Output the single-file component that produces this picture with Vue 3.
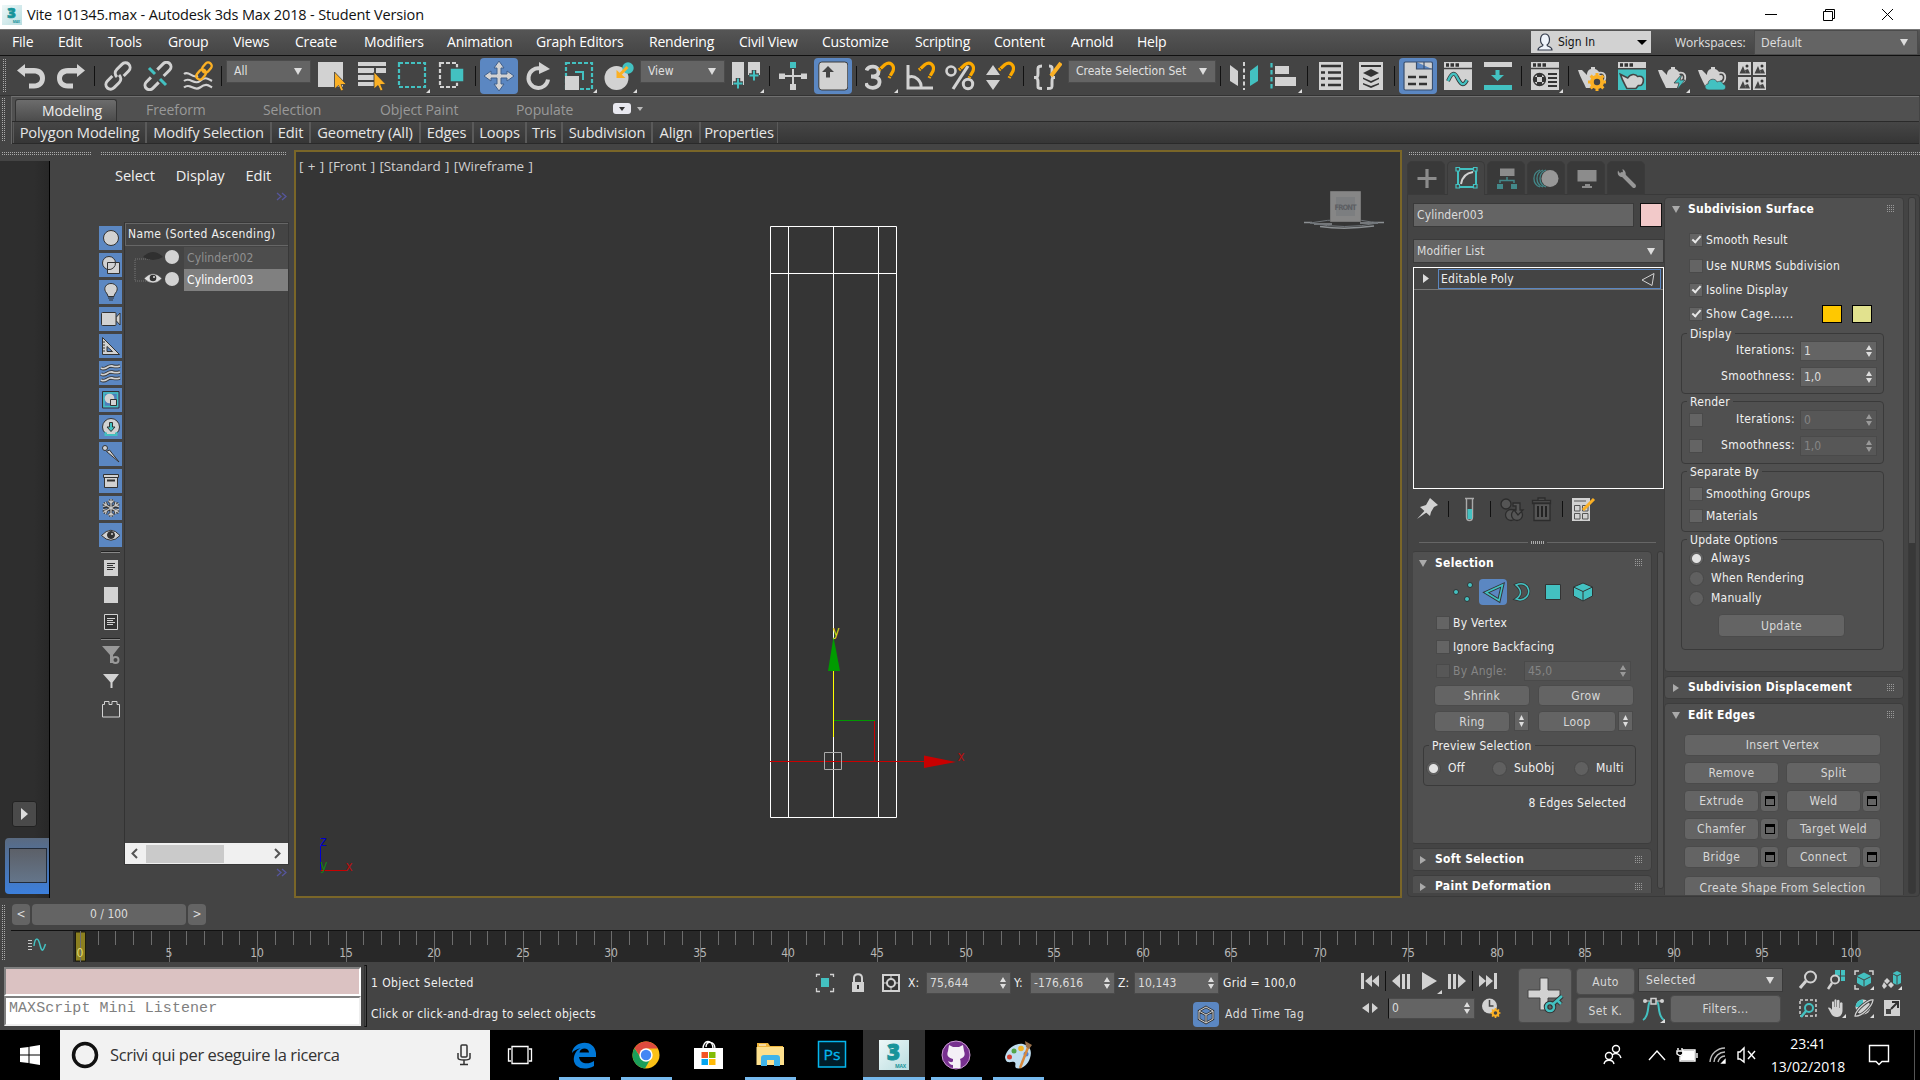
<script setup>
const menus = [
  ['File', 46], ['Edit', 50], ['Tools', 60], ['Group', 65], ['Views', 62], ['Create', 69], ['Modifiers', 83],
  ['Animation', 89], ['Graph Editors', 113], ['Rendering', 90], ['Civil View', 83], ['Customize', 93],
  ['Scripting', 79], ['Content', 77], ['Arnold', 66], ['Help', 50],
]
const tools = [
  'undo', 'redo', '|', 'link', 'unlink', 'bind', '|', { t: 'All', w: 87 }, 'select', 'selname', 'rect+', 'crossing', '|',
  'move*', 'rotate', 'scale+', 'place+', { t: 'View', w: 87 }, 'pivot+', '|', 'manip', 'keyb*', '|', 'snap3+', 'snapa', 'snapp', 'snaps', '|',
  'braces', { t: 'Create Selection Set', w: 150 }, '|', 'mirror', 'align+', '|', 'list', 'layers', '|', 'ribbon*', 'curve', 'schem', '|',
  'mat+', '|', 'tpgear', 'tpframe', 'tpbolt+', 'tpcloud', 'gallery',
].map((t) => {
  if (typeof t !== 'string') return { kind: 'combo', ...t }
  if (t === '|') return { kind: 'sep' }
  return { kind: 'icon', on: t.endsWith('*'), fly: t.endsWith('+'), id: '#' + t.replace(/[*+]/, '') }
})
const tabs = [['Modeling', 102, 26], ['Freeform', 116, 29], ['Selection', 118, 30], ['Object Paint', 136, 29], ['Populate', 98, 29]]
const groups = [
  ['Polygon Modeling', 133], ['Modify Selection', 125], ['Edit', 39], ['Geometry (All)', 110], ['Edges', 53],
  ['Loops', 53], ['Tris', 36], ['Subdivision', 90], ['Align', 48], ['Properties', 78],
]
const filters = ['sphere', 'shapes', 'bulb', 'camera', 'ruler', 'waves', 'groupi', 'xref', 'bone', 'box', 'snow', 'eye']
const cmdTabs = ['plus', 'modify', 'hier', 'motion', 'display', 'wrench']
const edgeRows = [
  [['Remove', 0], ['Split', 0]],
  [['Extrude', 1], ['Weld', 1]],
  [['Chamfer', 1], ['Target Weld', 0]],
  [['Bridge', 1], ['Connect', 1]],
]
const frames = Array.from({ length: 101 }, (_, i) => ({ i, x: Math.round(7 + i * 17.71) + 0.5 }))
const coords = [['X:', '75,644'], ['Y:', '-176,616'], ['Z:', '10,143']]
const apps = [
  ['edge', 1], ['chrome', 1], ['store', 0], ['folder', 1], ['ps', 0], ['max', 2], ['github', 1], ['paint', 1],
]
</script>

<template>
  <div class="app">
    <svg class="defs" width="0" height="0">
      <linearGradient id="gmax" x1="0" y1="0" x2="1" y2="1"><stop offset="0" stop-color="#eef8f8" /><stop offset="1" stop-color="#b9dde0" /></linearGradient>
      <g id="cursor"><path d="M0 0V17L4 13.5 6.5 19 9 18 6.700 12.500H12Z" fill="#fbb024" stroke="#3c3c3c" stroke-width=".8" /></g>
      <g id="magnet"><path d="M1 8 7 2.500C12-1 17 3 15 9L11 16" fill="none" stroke="#fba900" stroke-width="3.200" /><path d="M1.500 5.500 4 8.500M9.500 13 14 15" stroke="#444" stroke-width="1" /></g>
      <g id="teapot"><path d="M1 9H5L10 14C10 10 12 8.500 14 8V6H18V8C20 8.500 21 9.500 22 11 27 10 30 13 29 18 28 22 25 23 22 23L20 27H9C7 22 4 18 1 9Z" fill="#d2d2d2" /><path d="M22.500 13.500C26 12.500 27 15 26.500 17.500S24 20.500 23 20.500" fill="none" stroke="#444" stroke-width="1.500" /></g>
      <g id="gear"><circle r="5" fill="none" stroke="#fbb024" stroke-width="4" /><path d="M0-9V9M-9 0H9M-6.400-6.400 6.400 6.400M6.400-6.400-6.400 6.400" stroke="#fbb024" stroke-width="3" /><circle r="3.200" fill="#444" /></g>
      <symbol id="undo" viewBox="0 0 30 30"><path d="M1 9.500 9 3V7H18C25 7 29 11 29 17S25 27.500 18 27.500H13V22.500H18C22 22.500 24 20 24 17.500S22 12.500 18 12.500H9V16Z" fill="#d2d2d2" /></symbol>
      <symbol id="redo" viewBox="0 0 30 30"><path d="M29 9.500 21 3V7H12C5 7 1 11 1 17S5 27.500 12 27.500H17V22.500H12C8 22.500 6 20 6 17.500S8 12.500 12 12.500H21V16Z" fill="#d2d2d2" /></symbol>
      <symbol id="link" viewBox="0 0 30 30"><g transform="rotate(-45 15 15)" fill="none" stroke="#d2d2d2" stroke-width="3"><path d="M11 11H4A5 5 0 0 0 -1 16A5 5 0 0 0 4 20.500H11C14.500 20.500 16.500 18 16.500 15" /><path d="M19 19H26A5 5 0 0 0 31 14A5 5 0 0 0 26 9.500H19C15.500 9.500 13.500 12 13.500 15" /></g></symbol>
      <symbol id="unlink" viewBox="0 0 30 30"><g transform="rotate(-45 15 15)" fill="none" stroke="#d2d2d2" stroke-width="3"><path d="M11 20H2.500A4.500 4.500 0 0 1 2.500 11H9M19 19H27.500A4.500 4.500 0 0 0 27.500 10H19" /></g><path d="M6 7 12 13M17 18 23 24" stroke="#43c1c1" stroke-width="3" /></symbol>
      <symbol id="bind" viewBox="0 0 30 30"><path d="M1 13C6 9 9 18 15 15M1 20C7 15 11 25 17 20S25 18 29 20M1 26.500C7 21 11 31 17 26.500S25 24 29 26.500" fill="none" stroke="#d2d2d2" stroke-width="2.200" /><g transform="rotate(-50 21 10)" fill="none" stroke="#fbb024" stroke-width="2.400"><rect x="11" y="6.500" width="11" height="7" rx="3.500" /><rect x="20" y="6.500" width="11" height="7" rx="3.500" /></g></symbol>
      <symbol id="select" viewBox="0 0 30 30"><path d="M1 1H26V26H1Z" fill="#d2d2d2" /><use href="#cursor" x="17.500" y="11" /></symbol>
      <symbol id="selname" viewBox="0 0 30 30"><path d="M1 1H29V5H1ZM1 7H17V12H1ZM1 14H17V19H1ZM1 21H21V25H1ZM19 7H29V12H19Z" fill="#d2d2d2" /><use href="#cursor" x="17" y="11" /></symbol>
      <symbol id="rect" viewBox="0 0 30 30"><path d="M2 2H28V26H2Z" fill="none" stroke="#43c1c1" stroke-width="2.200" stroke-dasharray="4 2" /></symbol>
      <symbol id="crossing" viewBox="0 0 30 30"><path d="M3 2H20V26H3Z" fill="none" stroke="#d2d2d2" stroke-width="2.200" stroke-dasharray="4 2" /><path d="M13 7H27V21H13Z" fill="#43c1c1" stroke="#444" stroke-width="1.500" /></symbol>
      <symbol id="move" viewBox="0 0 30 30"><path d="M15 0 20 7H17V13H23V10L30 15 23 20V17H17V23H20L15 30 10 23H13V17H7V20L0 15 7 10V13H13V7H10Z" fill="#d2d2d2" stroke="#41608c" stroke-width="1" /></symbol>
      <symbol id="rotate" viewBox="0 0 30 30"><path d="M24 18.500A9.800 9.800 0 1 1 16 7.500" fill="none" stroke="#d2d2d2" stroke-width="4" /><path d="M15 1 26 8 15 13Z" fill="#d2d2d2" /></symbol>
      <symbol id="scale" viewBox="0 0 30 30"><path d="M2 2H28V28H2Z" fill="none" stroke="#43c1c1" stroke-width="2.200" stroke-dasharray="4 2" /><path d="M1 15H15V29H1Z" fill="#d2d2d2" /><path d="M11 11H19V19" fill="none" stroke="#43c1c1" stroke-width="2" /></symbol>
      <symbol id="place" viewBox="0 0 30 30"><circle cx="12.500" cy="17" r="12" fill="#d2d2d2" /><circle cx="24" cy="7" r="5.700" fill="#43c1c1" /><path d="M23.500 6 14.500 15" stroke="#fbb024" stroke-width="3" /><path d="M12.500 9V17H21.500Z" fill="#fbb024" /></symbol>
      <symbol id="pivot" viewBox="0 0 30 30"><path d="M1 1H13V24H1ZM17 1H29V14H17Z" fill="#d2d2d2" /><path d="M7 17V28M2 22.500H12M23 9V20M18 14.500H28" stroke="#444" stroke-width="4.500" /><path d="M7 17.500V27.500M2.500 22.500H11.500M23 9.500V19.500M18.500 14.500H27.500" stroke="#43c1c1" stroke-width="2" /></symbol>
      <symbol id="manip" viewBox="0 0 30 30"><path d="M4 15H26M15 8V26" stroke="#d2d2d2" stroke-width="2" /><path d="M1 12.500H7V18H1ZM23 12.500H29V18H23ZM12 23H18V29H12Z" fill="#d2d2d2" /><path d="M12 1H18V7H12Z" fill="#43c1c1" /></symbol>
      <symbol id="keyb" viewBox="0 0 30 30"><rect x="0.800" y="1" width="29" height="28" rx="3" fill="#d2d2d2" stroke="#3c3c3c" /><path d="M10 5 16 11H12V16.500H8V11H4Z" fill="#444" /></symbol>
      <symbol id="snap3" viewBox="0 0 30 30"><path d="M1.500 9.500C3 4 14 4 13.500 11 13.500 15 10 15.500 6 15.500 11 15.500 15 17 14.500 21.500 14 28.500 2 28.500 1 22" fill="none" stroke="#d2d2d2" stroke-width="3.800" /><use href="#magnet" x="13" y="1" /></symbol>
      <symbol id="snapa" viewBox="0 0 30 30"><path d="M3 4V27H28M4 16C10 14 17 20 16 27" fill="none" stroke="#d2d2d2" stroke-width="3" /><use href="#magnet" x="13" y="1" /></symbol>
      <symbol id="snapp" viewBox="0 0 30 30"><path d="M23 5 8 28" stroke="#d2d2d2" stroke-width="3.200" /><circle cx="6" cy="10" r="4.500" fill="none" stroke="#d2d2d2" stroke-width="2.600" /><circle cx="23" cy="23" r="4.700" fill="none" stroke="#d2d2d2" stroke-width="3" /><use href="#magnet" x="13" y="1" /></symbol>
      <symbol id="snaps" viewBox="0 0 30 30"><path d="M8 4 15 14H1ZM8 29 15 19H1Z" fill="#d2d2d2" /><use href="#magnet" x="13" y="1" /></symbol>
      <symbol id="braces" viewBox="0 0 30 30"><path d="M10 5C5 5 6 7 6 12S5 16.500 2 16.500C5 16.500 6 17 6 22S5 27.500 10 27.500M17 5C21 5 20 7 20 12S21 16.500 23 16.500C20 16.500 20 17 20 22S21 27.500 15 27.500" fill="none" stroke="#d2d2d2" stroke-width="3" /><path d="M19 15 29 2" stroke="#fbb024" stroke-width="4" /></symbol>
      <symbol id="mirror" viewBox="0 0 30 30"><path d="M1 4 9 10V25L1 20Z" fill="#d2d2d2" /><path d="M29 4 21 10V25L29 20Z" fill="#43c1c1" /><path d="M15 1V29" stroke="#d2d2d2" stroke-width="2" stroke-dasharray="4 2.500" /></symbol>
      <symbol id="align" viewBox="0 0 30 30"><path d="M2.500 2V28" stroke="#43c1c1" stroke-width="2.200" stroke-dasharray="4.500 2.500" /><path d="M6 5H20V13H6ZM6 16H27V25H6Z" fill="#d2d2d2" /></symbol>
      <symbol id="list" viewBox="0 0 30 30"><path d="M3 1H27V29H3Z" fill="#d2d2d2" /><path d="M5 5H25M5 11.500H9M12 11.500H25M5 17.500H9M12 17.500H25M5 24H9M12 24H25" stroke="#333" stroke-width="2.500" /></symbol>
      <symbol id="layers" viewBox="0 0 30 30"><path d="M3 1H27V29H3Z" fill="#d2d2d2" /><path d="M5 5H25" stroke="#333" stroke-width="2" /><path d="M15 8 23 12 15 16 7 12ZM7 16.500 15 20 23 16.500V18L15 22 7 18ZM7 22 15 25 23 22V23.500L15 27 7 23.500Z" fill="#333" /></symbol>
      <symbol id="ribbon" viewBox="0 0 30 30"><path d="M2 1H28Q29.500 1 29.500 2.500V27.500Q29.500 29 28 29H2.500Q1 29 1 27.500V2.500Q1 1 2.500 1ZM13.500 1V8H29M21 1V8" fill="#d2d2d2" stroke="#3a4f6d" stroke-width="1.200" /><path d="M5 16H13M16 16H24M5 23H13M16 23H24" stroke="#333" stroke-width="2.500" /></symbol>
      <symbol id="curve" viewBox="0 0 30 30"><path d="M1 1H29V29H1Z" fill="#d2d2d2" /><path d="M1 7.500H29" stroke="#444" stroke-width="1.500" /><path d="M3 4H6M7.500 4H11M12.500 4H16" stroke="#333" stroke-width="3.500" /><path d="M5 20C8 13 11 10 14 16S20 27 24 19" fill="none" stroke="#333" stroke-width="4" /><path d="M5 20C8 13 11 10 14 16S20 27 24 19" fill="none" stroke="#43c1c1" stroke-width="2.400" /></symbol>
      <symbol id="schem" viewBox="0 0 30 30"><path d="M1 1H29V6H1Z" fill="#d2d2d2" /><path d="M1 24H29V29H1ZM12.500 9H16.500V14H21L14.500 20 8 14H12.500Z" fill="#43c1c1" /></symbol>
      <symbol id="mat" viewBox="0 0 30 30"><path d="M1 1H29V29H1Z" fill="#d2d2d2" /><path d="M1 7.500H29" stroke="#444" stroke-width="1.500" /><path d="M3 4H6M7.500 4H11M12.500 4H16" stroke="#333" stroke-width="3.500" /><path d="M18 13H27M18 17H27M18 21H27M18 25H27" stroke="#333" stroke-width="2" /><circle cx="9.500" cy="18.500" r="6" fill="none" stroke="#333" stroke-width="1.300" /><path d="M7 13H12V16H7ZM4 16H7V21H4ZM12 16H15V21H12ZM7 21H12V24H7Z" fill="#333" /></symbol>
      <symbol id="tpgear" viewBox="0 0 30 30"><use href="#teapot" /><use href="#gear" x="20" y="21" /></symbol>
      <symbol id="tpframe" viewBox="0 0 30 30"><path d="M1 1H29V7H1Z" fill="#d2d2d2" /><path d="M3 4H6M7.500 4H11M12.500 4H16" stroke="#333" stroke-width="3.500" /><path d="M1 8.500H29V29H1Z" fill="#43c1c1" /><g transform="translate(2.500 8) scale(.82 .75)"><path d="M1 7 10 12C13 6 20 6 22 10 28 9 30 12 29 17S26 22 23 22L20 26H9C7 21 4 17 1 7Z" fill="#d2d2d2" stroke="#444" stroke-width="2" /></g></symbol>
      <symbol id="tpbolt" viewBox="0 0 30 30"><use href="#teapot" /><path d="M25 13 17 22H22L20 29 28 19H23Z" fill="#43c1c1" stroke="#444" stroke-width=".8" /></symbol>
      <symbol id="tpcloud" viewBox="0 0 30 30"><use href="#teapot" /><path d="M12 29C7 29 7 23 11 23 11 17 19 17 20 21 24 19 26 22 26 23 30 24 29 29 26 29Z" fill="#43c1c1" stroke="#444" stroke-width=".7" /></symbol>
      <symbol id="gallery" viewBox="0 0 30 30"><g id="gpic"><path d="M1 1H14V14H1Z" fill="#d2d2d2" /><path d="M2.500 12.500 6 5 9 12.500ZM8 9 11 8 13 12.500H9Z" fill="#444" /><circle cx="10" cy="5" r="1.500" fill="#333" /></g><use href="#gpic" x="15" /><use href="#gpic" y="15" /><use href="#gpic" x="15" y="15" /></symbol>

      <symbol id="sphere" viewBox="0 0 23 24"><circle cx="12" cy="12" r="7.500" /></symbol>
      <symbol id="shapes" viewBox="0 0 23 24"><circle cx="10" cy="10" r="6.500" /><path d="M8.500 9.500H20.500V20.500H8.500Z" /><path d="M16.500 9.500A6.500 6.500 0 0 1 9 16.500" fill="none" /></symbol>
      <symbol id="bulb" viewBox="0 0 23 24"><path d="M12 3.500C17 3.500 19.500 8 17.500 11.500 16 14 15.500 14 15 16.500H9C8.500 14 8 14 6.500 11.500 4.500 8 7 3.500 12 3.500Z" /><path d="M9 18H15M10 20H14" /></symbol>
      <symbol id="camera" viewBox="0 0 23 24"><path d="M17 10.500 21 6V18L17 13.500Z" /><rect x="2.500" y="5.500" width="14.500" height="13" rx="1" /></symbol>
      <symbol id="ruler" viewBox="0 0 23 24"><path d="M3.500 3.500V20.500H20.500ZM8 12.500 13.500 17.500H8Z" fill-rule="evenodd" /><path d="M4 8H6M4 11H6M4 14H6M4 17H6" /></symbol>
      <symbol id="waves" viewBox="0 0 23 24"><path d="M2 7C7 10 8 4 13 5S17 6 21 5M2 13C7 16 8 10 13 11S17 12 21 11M2 19C7 22 8 16 13 17S17 18 21 17" fill="none" stroke-width="3.500" /><path d="M2 7C7 10 8 4 13 5S17 6 21 5M2 13C7 16 8 10 13 11S17 12 21 11M2 19C7 22 8 16 13 17S17 18 21 17" fill="none" stroke="#d2d2d2" stroke-width="1.800" /></symbol>
      <symbol id="groupi" viewBox="0 0 23 24"><path d="M3.500 3.500H20V20H3.500Z" fill="#4d7dbb" /><path d="M5 5H18.500V18.500H5Z" fill="none" stroke="#43c1c1" stroke-width="1.500" /><circle cx="10.500" cy="10.500" r="4.800" stroke="none" /><path d="M11.500 11.500H17.500V17.500H11.500Z" /></symbol>
      <symbol id="xref" viewBox="0 0 23 24"><circle cx="12" cy="12" r="8.500" /><path d="M10.500 7.500H13.500V12H16L12 16.500 8 12H10.500Z" fill="#43c1c1" /><path d="M6.500 17V20H17.500V17" fill="none" stroke="#43c1c1" stroke-width="2" /></symbol>
      <symbol id="bone" viewBox="0 0 23 24"><circle cx="6" cy="6" r="2.500" /><path d="M7.500 9.500 10.500 8 20 20Z" /></symbol>
      <symbol id="box" viewBox="0 0 23 24"><path d="M5.500 8.500H18.500V18.500H5.500ZM4.500 5.500H19.500V8.500H4.500Z" /><path d="M8 11.500H16" stroke-width="2" /></symbol>
      <symbol id="snow" viewBox="0 0 23 24"><g fill="none" stroke-width="3"><path id="sn" d="M12 3V21M4.200 7.500 19.800 16.500M4.200 16.500 19.800 7.500M9.500 4.500 12 7 14.500 4.500M9.500 19.500 12 17 14.500 19.500M4 10.500 7.500 9.500 6.500 6M17 18 16 14.500 20 13.500M4 13.500 7.500 14.500 6.500 18M17 6 16 9.500 20 10.500" /></g><use href="#sn" fill="none" stroke="#c8c8c8" stroke-width="1.300" /></symbol>
      <symbol id="eye" viewBox="0 0 23 24"><path d="M2.500 12.500Q12 2 21 12.500 12 22 2.500 12.500Z" /><circle cx="12" cy="12" r="3.500" fill="#333" /><circle cx="13" cy="11" r="1" stroke="none" /></symbol>

      <symbol id="plus" viewBox="0 0 38 33"><path d="M19 8V27M9.500 17.500H28.500" stroke="#8c8c8c" stroke-width="3.200" /></symbol>
      <symbol id="modify" viewBox="0 0 38 33"><path d="M10 8H28V26H10Z" fill="none" stroke="#43c1c1" stroke-width="2" /><path d="M8 6.500H11.500V10H8ZM25.500 6.500H29V10H25.500ZM8 23.500H11.500V27H8ZM25.500 23.500H29V27H25.500Z" fill="#444" stroke="#43c1c1" stroke-width="1.200" /><path d="M13 23C14 17 18 12 25 11" fill="none" stroke="#d2d2d2" stroke-width="2" /></symbol>
      <symbol id="hier" viewBox="0 0 38 33"><path d="M12 7.500H26.500V15H12Z" fill="#8c8c8c" /><path d="M19 16V19M12 22V19.500H26V22" fill="none" stroke="#43898a" stroke-width="1.500" /><path d="M9 23H15V28H9ZM23 23H29V28H23Z" fill="#43898a" /></symbol>
      <symbol id="motion" viewBox="0 0 38 33"><path d="M15 9A9 9 0 0 0 15 26M12 9A9 9 0 0 0 12 26M18 9A9 9 0 0 0 18 26" fill="none" stroke="#43898a" stroke-width="1.300" /><circle cx="22" cy="17.500" r="8.500" fill="#979797" /></symbol>
      <symbol id="display" viewBox="0 0 38 33"><path d="M9.500 9H28.500V20.500H9.500ZM17 23H22V25H24V27H14V25H17Z" fill="#8c8c8c" /></symbol>
      <symbol id="wrench" viewBox="0 0 38 33"><path d="M14 13 26 25" stroke="#979797" stroke-width="4" stroke-linecap="round" /><path d="M10 9.500C8.500 15 13 17 16 15.500S18 10 14.500 8L15 11.500 12.500 13Z" fill="#979797" /></symbol>

      <symbol id="mag" viewBox="0 0 20 20"><circle cx="12.500" cy="7" r="5.500" fill="none" stroke="#d2d2d2" stroke-width="2" /><path d="M8 11 2 18" stroke="#d2d2d2" stroke-width="3" /></symbol>
      <symbol id="magall" viewBox="0 0 20 20"><path d="M9 0H19V11H9Z" fill="#43c1c1" /><path d="M14.500 0V11M9 6H19" stroke="#444" /><circle cx="9" cy="9.500" r="4" fill="#444" stroke="#d2d2d2" stroke-width="1.800" /><path d="M6 13 2 19" stroke="#d2d2d2" stroke-width="2.500" /></symbol>
      <symbol id="extents" viewBox="0 0 20 20"><path d="M1 5V1H5M15 1H19V5M1 15V19H5" fill="none" stroke="#d2d2d2" stroke-width="1.500" /><path d="M10 2.500 17 6V13L10 17 3 13V6Z" fill="#43c1c1" /><path d="M3 6.500 10 10 17 6.500M10 10V17" fill="none" stroke="#444" /><path d="M20 16V20H16Z" fill="#ddd" /></symbol>
      <symbol id="extall" viewBox="0 0 20 20"><path d="M5 8 8 11 5 14 2 11ZM9 12 12 15 9 18 6 15ZM2 12 5 16 2 19 0 16Z" fill="#d2d2d2" /><path d="M11 3 15 1 19 3V13L15 15 11 13Z" fill="#43c1c1" /><path d="M11 4 15 6 19 4M15 6V15" fill="none" stroke="#444" /><path d="M20 16V20H16Z" fill="#ddd" /></symbol>
      <symbol id="magreg" viewBox="0 0 20 20"><path d="M2 2H18V18H2Z" fill="none" stroke="#d2d2d2" stroke-width="1.500" stroke-dasharray="3 2" /><circle cx="11" cy="10" r="4" fill="#444" stroke="#43c1c1" stroke-width="2" /><path d="M8 13 3 19" stroke="#43c1c1" stroke-width="2.500" /></symbol>
      <symbol id="hand" viewBox="0 0 20 20"><path d="M2 10C3 9 5 10 6 12V4Q7 2.500 8 4V9H8.500V2Q9.500 .5 10.500 2V9H11V2.500Q12 1 13.500 2.500V10H14V5Q15 3.500 16.500 5V13C16 18 13 19 10.500 19 6 19 5 15 2 10Z" fill="#d2d2d2" /><path d="M20 16V20H16Z" fill="#ddd" /></symbol>
      <symbol id="orbit" viewBox="0 0 20 20"><circle cx="9" cy="9" r="7.500" fill="#d2d2d2" /><path d="M9 9V1.500A7.500 7.500 0 0 0 1.500 9Z" fill="#43c1c1" /><path d="M1 18C7 19 18 9 19 2 15 1 2 11 1 18Z" fill="none" stroke="#444" stroke-width="3" /><path d="M1 18C7 19 18 9 19 2 15 1 2 11 1 18Z" fill="none" stroke="#d2d2d2" stroke-width="1.300" /><path d="M20 16V20H16Z" fill="#ddd" /></symbol>
      <symbol id="maxi" viewBox="0 0 20 20"><path d="M2 2H18V18H2Z" fill="#d2d2d2" /><path d="M10 4H16V10M15.500 4.500 9 11" stroke="#333" stroke-width="2" fill="none" /><path d="M4 11H9V16H4Z" fill="#444" /></symbol>

      <symbol id="edge" viewBox="0 0 30 30"><path d="M3 13C4 1 25-2 27 13V17H10C11 24 19 25 25 21V26C14 32 3 27 5 17 6 12 9 9 12 8 9 9 5 10 3 13ZM10.500 12.500H20C20 7 11 7 10.500 12.500Z" fill="#0078d7" fill-rule="evenodd" /></symbol>
      <symbol id="chrome" viewBox="0 0 30 30"><circle cx="15" cy="15" r="13.500" fill="#fbc116" /><path d="M3.500 8A13.500 13.500 0 0 0 14 28.500L20 18 10 18Z" fill="#1b9e5a" /><path d="M3.500 8A13.500 13.500 0 0 1 26.800 8.500H15L9.500 13V17Z" fill="#dd4b3e" /><circle cx="15" cy="15" r="6.700" fill="#fff" /><circle cx="15" cy="15" r="5.200" fill="#4487f4" /></symbol>
      <symbol id="store" viewBox="0 0 30 30"><path d="M10 9C10-1 20-1 20 9M13 7C13 0 22 1 22 9" fill="none" stroke="#fff" stroke-width="1.400" /><path d="M1 8H30V29H1Z" fill="#fff" /><path d="M8.500 12H15V18H8.500Z" fill="#f35325" /><path d="M16 12H22.500V18H16Z" fill="#81bc06" /><path d="M8.500 19H15V25H8.500Z" fill="#05a6f0" /><path d="M16 19H22.500V25H16Z" fill="#ffba08" /></symbol>
      <symbol id="folder" viewBox="0 0 30 30"><path d="M2 3H13L15 6H28V14H2Z" fill="#f0b63c" /><path d="M1.500 7H29V25H1.500Z" fill="#fde08d" /><path d="M4 5H11" stroke="#fff" /><path d="M6 26V18Q6 15 9 15H22Q25 15 25 18V26H19V20H12V26Z" fill="#3fb4ea" /></symbol>
      <symbol id="ps" viewBox="0 0 30 30"><path d="M1.500 1.500H28.500V27H1.500Z" fill="#001d29" stroke="#05b6ee" stroke-width="1.500" /><text x="6.500" y="20" font-size="15" fill="#05b6ee" stroke="#05b6ee" stroke-width=".3" textLength="17" lengthAdjust="spacingAndGlyphs">Ps</text></symbol>
      <symbol id="max" viewBox="0 0 30 30"><path d="M0 0H30V30H0Z" fill="url(#gmax)" /><text x="8" y="19.500" font-size="22" font-weight="900" fill="#18949a" stroke="#18949a">3</text><text x="16" y="27.500" font-size="5" font-weight="bold" fill="#18949a" letter-spacing="-.2">MAX</text></symbol>
      <symbol id="github" viewBox="0 0 30 30"><circle cx="15" cy="15" r="14" fill="#77308f" stroke="#c99bd2" /><path d="M8 5 12 7H18L22 5 23 11C25 16 22 18 19 19 20 21 19.500 25 19.500 28H12V25C9 25 8 23 7 21 9 22 11 23 12 21V19C8 18 5 16 7 11Z" fill="#f4f0f6" /></symbol>
      <symbol id="paint" viewBox="0 0 30 30"><path d="M2 17C4 8 12 3 20 4 28 6 29 12 27 18 25 25 18 30 13 28 11 26 14 23 11 22 8 21 3 25 2 17Z" fill="#c0def0" /><circle cx="6.500" cy="17" r="2.500" fill="#d54335" /><circle cx="11" cy="11" r="2.500" fill="#53a548" /><circle cx="18" cy="8.500" r="2.800" fill="#f0b429" /><circle cx="23" cy="14" r="2.500" fill="#4f81d3" /><path d="M26 5 17 28" stroke="#d88a3d" stroke-width="2.500" /><path d="M22 1 29 5 26 9 23 7Z" fill="#9a714c" /></symbol>
    </svg>

    <header class="title">
      <svg width="20" height="20" viewBox="0 0 30 30"><use href="#max" width="30" height="30" /></svg>
      <span class="title-text">Vite 101345.max - Autodesk 3ds Max 2018 - Student Version</span>
      <svg class="win" width="150" height="29" fill="none" stroke="#000"><path d="M20 14.500H32M78.500 11.500H87.500V20.500H78.500ZM80.500 11V9.500H89.500V18.500H88M137 9 148 20M148 9 137 20" /></svg>
    </header>

    <nav class="menu">
      <span v-for="m in menus" :key="m[0]" :style="{ width: m[1] + 'px' }">{{ m[0] }}</span>
      <div class="signin">
        <svg width="18" height="20" viewBox="0 0 18 20"><path d="M2 18C2 14 7 15 7 13 3 10 4 2 9 2S15 10 11 13C11 15 16 14 16 18Z" fill="#eef3fb" stroke="#333b4c" stroke-width="1.200" /></svg>
        <b>Sign In</b><i class="tri black"></i>
      </div>
      <span class="ws">Workspaces:</span>
      <div class="wscombo">Default<i class="tri"></i></div>
    </nav>

    <div class="toolbar">
      <i class="grip v"></i>
      <template v-for="(t, n) in tools" :key="n">
        <i v-if="t.kind === 'sep'" class="tsep"></i>
        <div v-else-if="t.kind === 'combo'" class="tcombo" :style="{ width: t.w + 'px' }"><span>{{ t.t }}<i class="tri"></i></span></div>
        <div v-else class="tool" :class="{ on: t.on, fly: t.fly }"><svg width="30" height="30"><use :href="t.id" width="30" height="30" /></svg></div>
      </template>
    </div>

    <div class="ribbon">
      <i class="grip v"></i>
      <div class="ribbon-main">
        <div class="tabs">
          <span v-for="(t, n) in tabs" :key="t[0]" :class="{ cur: !n }" :style="{ width: t[1] + 'px', paddingLeft: t[2] + 'px' }">{{ t[0] }}</span>
          <i class="pill"><i class="tri small"></i></i><i class="tri small pale"></i>
        </div>
        <div class="groups"><span v-for="g in groups" :key="g[0]" :style="{ width: g[1] + 'px' }">{{ g[0] }}</span></div>
      </div>
    </div>

    <main class="work">
      <aside class="strip">
        <i class="grip h"></i>
        <div class="strip-body">
          <div class="play"><svg width="8" height="12"><path d="M0 0 7 6 0 12Z" fill="#ddd" /></svg></div>
          <div class="thumb"><i></i></div>
        </div>
      </aside>

      <aside class="explorer">
        <i class="grip h"></i>
        <div class="ex-menu"><span>Select</span><span>Display</span><span>Edit</span></div>
        <svg class="more" width="12" height="9"><path d="M1 1 5 4.500 1 8M6 1 10 4.500 6 8" fill="none" stroke="#55559c" stroke-width="1.300" /></svg>
        <div class="ex-body">
          <div class="ex-icons">
            <svg v-for="f in filters" :key="f" class="fbtn" width="23" height="24" fill="#d2d2d2" stroke="#333"><use :href="'#' + f" /></svg>
            <svg width="23" height="180" viewBox="0 550 23 180" fill="#d2d2d2">
              <path d="M2 551.500H21M2 638.500H21" stroke="#222" /><path d="M2 552.500H21M2 639.500H21" stroke="#888" />
              <path d="M5 560H19V576H5ZM5 587H19V603H5Z" /><path d="M5.500 614.500H18.500V629.500H5.500Z" fill="#333" stroke="#d2d2d2" />
              <path d="M8 563.500H16M8 565.500H14M8 567.500H16M8 569.500H14" stroke="#333" /><path d="M8 618.500H16M8 620.500H14M8 622.500H16M8 624.500H14" stroke="#d2d2d2" />
              <path d="M3 646H21L14 655V663H11V655Z" fill="#999" /><circle cx="16.500" cy="660" r="3" fill="#444" stroke="#999" stroke-width="2" />
              <path d="M4 674H20L13.500 682.500V688H11.500V682.500Z" /><path d="M3.500 704.500H5.500V701.500H10V704.500H13V701.500H18V704.500H20.500V717H3.500Z" fill="none" stroke="#d2d2d2" />
            </svg>
          </div>
          <div class="ex-list">
            <div class="ex-head">Name (Sorted Ascending)</div>
            <div class="ex-row dim">
              <svg width="59" height="22"><path d="M25 12H10V22" fill="none" stroke="#777" stroke-dasharray="1 1" /><path d="M18 10Q28 0 38 10 28 16 18 10Z" fill="#303030" /><circle cx="47" cy="10" r="7" fill="#d2d2d2" /></svg><span>Cylinder002</span>
            </div>
            <div class="ex-row sel">
              <svg width="59" height="22"><path d="M25 12H10V0" fill="none" stroke="#777" stroke-dasharray="1 1" /><path d="M19 9.500Q28 0 37 9.500 28 18.500 19 9.500Z" fill="#ddd" stroke="#333" stroke-width=".5" /><circle cx="28" cy="9" r="3.300" fill="#333" /><circle cx="29" cy="8" r="1" fill="#ddd" /><circle cx="47" cy="10" r="7" fill="#d2d2d2" /></svg><span>Cylinder003</span>
            </div>
            <div class="hscroll"><svg width="163" height="21" fill="none" stroke="#555" stroke-width="2"><path d="M21 2H99V20H21Z" fill="#cacaca" stroke="none" /><path d="M12 6 7.500 10.500 12 15M150 6 154.500 10.500 150 15" /></svg></div>
          </div>
        </div>
        <svg class="more" width="12" height="9"><path d="M1 1 5 4.500 1 8M6 1 10 4.500 6 8" fill="none" stroke="#55559c" stroke-width="1.300" /></svg>
      </aside>

      <section class="viewport">
        <div class="vlabel">[ + ] [Front ] [Standard ] [Wireframe ]</div>
        <svg class="scene" width="1104" height="744" viewBox="296 152 1104 744" fill="none">
          <path d="M770.500 226.500H896.500V817.500H770.500ZM770.500 273.500H896.500M788.500 226V817M833.500 226V817M878.500 226V817" stroke="#fff" />
          <path d="M833.500 671V737" stroke="#ff0" /><path d="M834 720.500H875" stroke="#090" /><path d="M874.500 721V761M770 761.500H924" stroke="#c80000" />
          <path d="M833.500 637 840 671H828Z" fill="#009b00" /><path d="M924 755.500V768L956 762Z" fill="#c80000" /><path d="M824.500 752.500H841.500V769.500H824.500Z" stroke="#aaa" />
          <path d="M320.500 846V870" stroke="#0000d0" /><path d="M321 870.500H347" stroke="#c80000" />
          <text x="320" y="846" fill="#0000c8" font-size="14">z</text><text x="345.500" y="871" fill="#b41010" font-size="13.500">x</text><text x="320" y="870" fill="#148214" font-size="14">y</text>
          <text x="832.500" y="636" fill="#dcdc10" font-size="13.500">y</text><text x="957.500" y="761" fill="#b41010" font-size="13.500">x</text>
          <path d="M1304 222.500H1312M1314 224H1332M1360 223H1378M1372 222.500H1384M1320 226.500Q1345 230 1374 226" stroke="#8b8f92" stroke-width="1.500" /><path d="M1310 223Q1345 216 1378 223 1345 230 1310 223Z" stroke="#70757a" />
          <path d="M1330.500 191.500H1360.500V221.500H1330.500Z" fill="#868686" stroke="#777" /><path d="M1336 197H1355V216H1336Z" fill="#7c7e80" />
          <text x="1334.500" y="210" font-size="7.500" font-weight="bold" fill="#5c5f63" textLength="22">FRONT</text>
        </svg>
      </section>

      <aside class="panel">
        <i class="grip h"></i>
        <div class="ctabs"><span v-for="(c, n) in cmdTabs" :key="c" :class="{ cur: n === 1 }"><svg width="38" height="33"><use :href="'#' + c" /></svg></span></div>
        <div class="pbody">
          <div class="pleft">
            <div class="namerow"><div class="field">Cylinder003</div><i class="pink"></i></div>
            <div class="field modlist">Modifier List<i class="tri"></i></div>
            <div class="stack"><div class="srow"><svg width="24" height="19"><path d="M9 5 15 9.500 9 14Z" fill="#ddd" /></svg><div class="sname">Editable Poly<svg width="15" height="15"><path d="M1 8 13 1.500 11 13.500Z" fill="none" stroke="#d2d2d2" /></svg></div></div></div>
            <svg class="sicons" width="240" height="34" viewBox="1413 493 240 34">
              <path d="M1428 508 1417 520 1430 511Z" fill="#d2d2d2" /><path d="M1430 499 1438 506 1434 508 1431 513 1430 517 1420 508 1426 506Z" fill="#d2d2d2" />
              <path d="M1448.500 502V518M1490.500 502V518M1562.500 502V518" stroke="#111" />
              <path d="M1465 499.500H1474M1466.500 500V518Q1466.500 521.500 1469.500 521.500T1472.500 518V500" stroke="#aaa" fill="none" stroke-width="1.400" /><path d="M1467.500 510H1472V520H1467.500Z" fill="#43c1c1" />
              <g fill="#555" stroke="#2c2c2c" stroke-width="1.300"><circle cx="1506" cy="505" r="5" /><circle cx="1511" cy="516" r="5.500" /><circle cx="1517" cy="516" r="5.500" /><path d="M1513 504H1520V511H1523L1518 516 1514 511H1516V507H1513Z" /><path d="M1533 504H1550V521.500H1534V504ZM1532.500 501.500H1550.500V504.500H1532.500ZM1538 501.500V499H1545V501.500" /></g>
              <path d="M1538 507V518M1542 507V518M1546 507V518" stroke="#222" stroke-width="2" />
              <path d="M1572 499H1590V522H1572Z" fill="#d2d2d2" /><path d="M1574 502H1586M1574.500 506.500H1580V512H1574.500ZM1582.500 506.500H1588V512H1582.500ZM1574.500 514.500H1580V520H1574.500ZM1582.500 514.500H1588V520H1582.500Z" fill="none" stroke="#555" /><path d="M1583 511 1594 500" stroke="#fbb024" stroke-width="3" />
            </svg>
            <div class="split"><i></i><b></b><i></i></div>
            <div class="pscroll">
              <div class="rolls">
                <div class="roll selroll">
                  <h3><i class="tri"></i>Selection<i class="dots"></i></h3>
                  <div class="subobj">
                    <svg width="170" height="28" viewBox="1450 579 170 28" fill="#43c1c1" stroke="#333">
                      <rect x="1479" y="580" width="28" height="26" rx="4" fill="#5b87c2" stroke="none" />
                      <circle cx="1456" cy="593" r="2.500" /><circle cx="1470" cy="586" r="2.500" /><circle cx="1467" cy="600" r="2.500" />
                      <path d="M1486 593.500 1502.500 586 1499 601.500Z" fill="none" stroke-width="3.500" /><path d="M1486 593.500 1502.500 586 1499 601.500Z" fill="none" stroke="#43c1c1" stroke-width="1.600" />
                      <path d="M1516 586C1530 580 1534 599 1520 601L1516 600C1522 596 1522 591 1516 586Z" fill="none" stroke-width="3" /><path d="M1516 586C1530 580 1534 599 1520 601L1516 600C1522 596 1522 591 1516 586Z" fill="none" stroke="#43c1c1" stroke-width="1.500" />
                      <path d="M1545.500 585.500H1560.500V600.500H1545.500Z" /><path d="M1583 584 1592.500 588V597L1583 602 1573.500 597V588Z" /><path d="M1573.500 588 1583 592.500 1592.500 588M1583 592.500V602" fill="none" />
                    </svg>
                  </div>
                  <div class="ck"><i class="cb"></i>By Vertex</div>
                  <div class="ck"><i class="cb"></i>Ignore Backfacing</div>
                  <div class="ck off"><i class="cb"></i><span class="ang">By Angle:</span><span class="spin w107">45,0<u></u></span></div>
                  <div class="brow b1"><button>Shrink</button><button>Grow</button></div>
                  <div class="brow b2"><button class="ring">Ring</button><span class="spin mini"><u></u></span><button class="loop">Loop</button><span class="spin mini"><u></u></span></div>
                  <div class="grp prev"><em>Preview Selection</em><span><i class="rb on"></i>Off</span><span><i class="rb"></i>SubObj</span><span><i class="rb"></i>Multi</span></div>
                  <div class="count">8 Edges Selected</div>
                </div>
                <div class="roll closed"><h3><i class="tri right"></i>Soft Selection<i class="dots"></i></h3></div>
                <div class="roll closed"><h3><i class="tri right"></i>Paint Deformation<i class="dots"></i></h3></div>
              </div>
              <i class="bar"></i>
            </div>
          </div>

          <div class="pright">
            <div class="rolls">
              <div class="roll subsurf">
                <h3><i class="tri"></i>Subdivision Surface<i class="dots"></i></h3>
                <div class="ck first"><i class="cb on"></i>Smooth Result</div>
                <div class="ck second"><i class="cb"></i>Use NURMS Subdivision</div>
                <div class="ck"><i class="cb on"></i>Isoline Display</div>
                <div class="ck"><i class="cb on"></i><span class="cage">Show Cage......</span><i class="sw orange"></i><i class="sw"></i></div>
                <div class="grp g1"><em>Display</em><p><label>Iterations:</label><span class="spin">1<u></u></span></p><p><label>Smoothness:</label><span class="spin">1,0<u></u></span></p></div>
                <div class="grp g2"><em>Render</em><p><i class="cb"></i><label>Iterations:</label><span class="spin off">0<u></u></span></p><p><i class="cb"></i><label>Smoothness:</label><span class="spin off">1,0<u></u></span></p></div>
                <div class="grp g3"><em>Separate By</em><div class="ck"><i class="cb"></i>Smoothing Groups</div><div class="ck"><i class="cb"></i>Materials</div></div>
                <div class="grp g4"><em>Update Options</em><div class="ck"><i class="rb on"></i>Always</div><div class="ck"><i class="rb"></i>When Rendering</div><div class="ck"><i class="rb"></i>Manually</div><button>Update</button></div>
              </div>
              <div class="roll closed"><h3><i class="tri right"></i>Subdivision Displacement<i class="dots"></i></h3></div>
              <div class="roll edges">
                <h3><i class="tri"></i>Edit Edges<i class="dots"></i></h3>
                <button class="wide">Insert Vertex</button>
                <div v-for="(r, n) in edgeRows" :key="n" class="erow">
                  <div v-for="b in r" :key="b[0]"><button>{{ b[0] }}</button><button v-if="b[1]" class="opt"><i></i></button></div>
                </div>
                <button class="wide last">Create Shape From Selection</button>
              </div>
            </div>
            <i class="bar rbar"></i>
          </div>
        </div>
      </aside>
    </main>

    <section class="time">
      <i class="grip v"></i>
      <div class="time-main">
        <div class="slider"><span class="ar">&lt;</span><span class="thumbw">0 / 100</span><span class="ar">&gt;</span></div>
        <div class="track">
          <svg width="62" height="31"><path d="M17 9.500H21M17 12.500H21M17 15.500H21M17 18.500H21" stroke="#c8c8c8" /><path d="M23 15C24 6 27 6 29 14S32 20 34.500 13" fill="none" stroke="#43c1c1" stroke-width="1.500" /></svg>
          <svg width="1785" height="31" class="ticks">
            <path d="M2.500 1H12.500V30H2.500Z" fill="#8c8020" stroke="#1d1b0c" />
            <g v-for="f in frames" :key="f.i"><path :d="`M${f.x} 0V${f.i % 5 ? 14 : 31}`" stroke="#6d6d6d" /><text v-if="f.i % 5 === 0" :x="f.x - 0.5" y="26" text-anchor="middle" :fill="f.i ? '#b8b8b8' : '#e0da70'">{{ f.i }}</text></g>
          </svg>
        </div>
      </div>
    </section>

    <section class="status">
      <div class="listener"><div class="pinkbox"></div><div class="whitebox">MAXScript Mini Listener</div></div>
      <i class="sdiv"></i>
      <div class="smid">
        <div class="line1">
          <span class="msg">1 Object Selected</span>
          <svg width="94" height="26" viewBox="812 969 94 26" fill="none" stroke="#d2d2d2"><path d="M816.500 976V973.500H820M830 973.500H833.500V976M816.500 987V990.500H820M830 990.500H833.500V987" stroke-width="1.300" /><path d="M821 977H829V986H821Z" fill="#43c1c1" stroke="none" /><path d="M854 981V977C854 972 862 972 862 977V981" stroke-width="2" /><path d="M852 981H864V991H852Z" fill="#d2d2d2" stroke="none" /><path d="M858 984V988" stroke="#333" stroke-width="2" /><path d="M883 974H899V990H883Z" fill="#333" stroke-width="2" /><circle cx="891" cy="982" r="4" stroke-width="2" /><path d="M891 975V979M891 985V989M884 982H888M894 982H898" /></svg>
          <template v-for="c in coords" :key="c[0]"><label>{{ c[0] }}</label><span class="spin">{{ c[1] }}<u></u></span></template>
          <span class="grid">Grid = 100,0</span>
        </div>
        <div class="line2"><span class="msg">Click or click-and-drag to select objects</span><i class="tt"><svg width="26" height="25" fill="none" stroke="#333" stroke-width="2.500"><path id="ttp" d="M13 5 20 9V17L13 21 6 17V9ZM6 9 13 13 20 9M13 13V21" /><use href="#ttp" stroke="#d2d2d2" stroke-width="1" /></svg></i><span class="att">Add Time Tag</span></div>
      </div>
      <div class="play-ctl">
        <svg width="146" height="28" viewBox="1358 967 146 28" fill="#d2d2d2"><path d="M1361 973H1364V989H1361ZM1372 975V987L1365 981ZM1379 975V987L1372 981ZM1400 974V988L1392 981ZM1402 974H1405V989H1402ZM1407 974H1410V989H1407ZM1422 972 1437 981 1422 990ZM1442 990V994H1437ZM1448 974H1451V989H1448ZM1453 974H1456V989H1453ZM1458 974 1466 981 1458 988ZM1479 975V987L1486 981ZM1486 975V987L1493 981ZM1494 973H1497V989H1494Z" /><path d="M1385.500 971V991M1472.500 971V991" stroke="#111" /></svg>
        <div class="pc2"><svg width="30" height="22"><path d="M11 6V16L4 11ZM14 6V16L20 11Z" fill="#d2d2d2" /></svg><span class="spin">0<u></u></span><svg width="28" height="26"><circle cx="11.500" cy="11" r="7.500" fill="#d2d2d2" /><path d="M11.500 5V11H15.500" stroke="#444" stroke-width="1.500" fill="none" /><use href="#gear" transform="translate(17.500 18) scale(.55)" /></svg></div>
      </div>
      <button class="bigkey"><svg width="53" height="54"><path d="M21 9H29V21H41V29H29V41H21V29H9V21H21Z" fill="#d2d2d2" stroke="#444" /><path d="M32 37 43 27M38 31 42 35" stroke="#333" stroke-width="4.500" /><circle cx="31" cy="38" r="4" fill="none" stroke="#333" stroke-width="4.500" /><path d="M33 36 43 27M38 31 42 35" stroke="#43c1c1" stroke-width="2.500" /><circle cx="31" cy="38" r="4" fill="none" stroke="#43c1c1" stroke-width="2.500" /></svg></button>
      <div class="keys"><button>Auto</button><button>Set K.</button></div>
      <div class="keyf"><div class="field">Selected<i class="tri"></i></div><div class="kf2"><svg width="32" height="28"><path d="M5 25C12 21 9 8 12 7M26 25C19 21 22 8 19 7" fill="none" stroke="#43c1c1" stroke-width="2" /><path d="M7 6H23" stroke="#d2d2d2" /><circle cx="7" cy="6" r="2" fill="#d2d2d2" /><circle cx="24" cy="6" r="2" fill="#d2d2d2" /><path d="M13 3.500H18V9H13Z" fill="#444" stroke="#d2d2d2" stroke-width="1.500" /><path d="M27 24V28H22Z" fill="#ddd" /></svg><button>Filters...</button></div></div>
      <div class="nav"><svg v-for="i in ['mag', 'magall', 'extents', 'extall', 'magreg', 'hand', 'orbit', 'maxi']" :key="i" width="20" height="20"><use :href="'#' + i" /></svg></div>
    </section>

    <footer class="taskbar">
      <div class="start"><svg width="20" height="20" fill="#fff"><path d="M0 3 8.500 2V9.500H0ZM9.500 1.800 20 0V9.500H9.500ZM0 10.500H8.500V18L0 17ZM9.500 10.500H20V20L9.500 18.200Z" /></svg></div>
      <div class="search"><svg width="28" height="28"><circle cx="14" cy="14" r="11.500" fill="none" stroke="#111" stroke-width="3.500" /></svg><span>Scrivi qui per eseguire la ricerca</span><svg width="16" height="22" fill="none" stroke="#333" stroke-width="1.500"><rect x="5" y="1" width="6" height="12" rx="1" /><path d="M2 9V14Q2 16 8 16T14 14V9M8 16V20M4 20.500H12" /></svg></div>
      <div class="tview"><svg width="26" height="20" fill="none" stroke="#fff" stroke-width="1.300"><path d="M5 1.500H21V18.500H5ZM4 4H1.500V16H4M22 4H24.500V16H22" /></svg></div>
      <div v-for="a in apps" :key="a[0]" class="tapp" :class="{ open: a[1], active: a[1] === 2 }"><svg width="30" height="30"><use :href="'#' + a[0]" /></svg></div>
      <svg class="tray" width="158" height="50" viewBox="1600 1030 158 50" fill="none" stroke="#fff" stroke-width="1.400"><circle cx="1616" cy="1049" r="3.500" /><circle cx="1609" cy="1056" r="3.500" /><path d="M1604 1064C1605 1059 1613 1059 1614 1064M1612 1055C1616 1052 1620 1054 1621 1058M1649 1060 1657 1051 1665 1060" /><path d="M1682 1050H1695V1061H1680V1057" /><path d="M1683 1051.500H1694V1059.500H1681V1056H1683Z" fill="#fff" /><path d="M1697 1053V1058M1678 1048V1050M1682 1048V1050M1677 1051H1683V1054L1680 1056 1677 1054Z" /><path d="M1710 1062A15 15 0 0 1 1725 1048M1714 1062A11 11 0 0 1 1725 1052M1718 1062A8 8 0 0 1 1725 1056" stroke="#bbb" /><path d="M1725 1060V1063H1722Z" fill="#fff" /><path d="M1738 1052H1740L1744 1048V1062L1740 1059H1738ZM1748 1051 1755 1059M1755 1051 1748 1059" /></svg>
      <div class="clock"><span>23:41</span><span>13/02/2018</span></div>
      <svg class="notif" width="22" height="22" fill="none" stroke="#fff" stroke-width="1.400"><path d="M1.500 1.500H20.500V17.500H14L11 20.500 8 17.500H1.500Z" /></svg>
      <i class="desk"></i>
    </footer>
  </div>
</template>

<style>
html, body { margin: 0; background: #444; overflow: hidden; }
</style>

<style scoped>
* { box-sizing: border-box; }
.app { width: 1920px; height: 1080px; display: flex; flex-direction: column; background: #444; color: #f0f0f0; font: 12px/16px "DejaVu Sans Condensed", "DejaVu Sans", sans-serif; font-stretch: condensed; overflow: hidden; white-space: nowrap; }
.defs { position: absolute; }
i, em { font-style: normal; }
svg, i, button { flex: none; }
svg { display: block; }
button { font: inherit; letter-spacing: .35px; color: #d8d8d8; background: #646464; border: 1px solid #4b4b4b; border-radius: 4px; padding: 0; height: 22px; text-align: center; }
.tri { display: block; width: 0; height: 0; border: 4px solid transparent; border-top: 7px solid #ddd; border-bottom: 0; }
.tri.black { border-top-color: #000; border-left-width: 5px; border-right-width: 5px; border-top-width: 5px; }
.tri.small { border-width: 4px 3px 0; }
.tri.pale { border-top-color: #bbb; margin: 10px 0 0 6px; }
.tri.right { border: 4px solid transparent; border-left: 6px solid #aaa; border-right: 0; }
.grip.h { display: block; height: 3px; background: repeating-linear-gradient(90deg, transparent 0 1px, #444 1px 2px), linear-gradient(#aaa 1px, #444 1px 2px, #aaa 2px); }
.grip.v { width: 3px; background: repeating-linear-gradient(transparent 0 1px, #444 1px 2px), linear-gradient(90deg, #aaa 1px, #444 1px 2px, #aaa 2px); }

.title { height: 29px; flex: none; background: #fff; color: #111; display: flex; align-items: center; padding-left: 2px; font: 14.500px/20px "Open Sans", sans-serif; }
.title-text { margin-left: 5px; letter-spacing: -.14px; }
.win { margin-left: auto; margin-right: 25px; width: 150px; }

.menu { height: 27px; flex: none; display: flex; background: linear-gradient(#555, #454545); border-bottom: 1px solid #111; border-top: 1px solid #777; padding-left: 12px; font: 14px/24px "Open Sans", sans-serif; letter-spacing: -.2px; color: #fff; }
.menu > span { flex: none; }
.signin { width: 120px; height: 22px; margin: 1px 0 0 344px; background: #d2d2d2; color: #111; display: flex; align-items: center; padding: 0 4px 0 5px; font: 12px/16px "DejaVu Sans Condensed", sans-serif; letter-spacing: 0; }
.signin b { font-weight: 400; margin: 0 auto 0 4px; }
.menu .ws { margin-left: 24px; width: 79px; font: 12px/25px "Open Sans", sans-serif; letter-spacing: 0; color: #e0e0e0; }
.wscombo { width: 164px; background: #646464; border: 1px solid #4b4b4b; display: flex; align-items: center; justify-content: space-between; padding: 0 9px 0 6px; font-size: 12px; letter-spacing: 0; color: #e0e0e0; }

.toolbar { height: 40px; flex: none; display: flex; align-items: center; padding-left: 3px; border-bottom: 1px solid #333; }
.toolbar .grip { height: 33px; margin-right: 5px; }
.tsep { width: 7px; height: 20px; background: linear-gradient(#111, #111) 3px 0 / 1px 100% no-repeat; }
.tool { width: 40px; height: 36px; flex: none; display: flex; align-items: center; justify-content: center; position: relative; }
.tool svg { overflow: visible; }
.tool.on::before { content: ""; position: absolute; inset: 0 1px; background: #5b87c2; border-radius: 4px; z-index: 0; }
.tool.on svg { position: relative; }
.tool.fly::after { content: ""; position: absolute; right: 2px; bottom: 1px; border: 2.500px solid #ddd; border-left-color: transparent; border-top-color: transparent; }
.tcombo { height: 32px; flex: none; padding: 0 1px; }
.tcombo span { height: 23px; background: #646464; border: 1px solid #4b4b4b; display: flex; align-items: center; justify-content: space-between; padding: 0 8px 0 7px; color: #e0e0e0; font-size: 12px; }

.ribbon { height: 48px; flex: none; display: flex; padding-left: 2px; }
.ribbon .grip { margin: 2px 6px 2px 0; }
.ribbon-main { flex: 1; border-top: 1px solid #707070; border-left: 1px solid #666; background: #505050; margin-right: 1px; font: 14px/20px "Open Sans", sans-serif; letter-spacing: -.1px; }
.tabs { height: 24px; display: flex; padding-left: 3px; color: #999; }
.tabs span { flex: none; line-height: 25px; }
.tabs .cur { color: #eee; background: linear-gradient(#6c6c6c, #4c4c4c); border: 1px solid #333; border-bottom: 0; border-radius: 3px 3px 0 0; margin-top: 2px; line-height: 21px; }
.pill { width: 18px; height: 11px; margin: 6px 0 0 28px; background: #e8e8ef; border-radius: 3px; display: flex; align-items: center; justify-content: center; }
.pill .tri { border-top-color: #333; }
.groups { height: 23px; display: flex; background: linear-gradient(#464646, #363636); border-top: 1px solid #2a2a2a; border-bottom: 1px solid #2a2a2a; padding-left: 1px; font-size: 14.700px; line-height: 21px; letter-spacing: -.15px; }
.groups span { flex: none; border-right: 1px solid #5a5a5a; border-left: 1px solid #5a5a5a; text-align: center; color: #e6e6e6; }

.work { height: 756px; flex: none; display: flex; }
.strip { width: 94px; padding-top: 8px; }
.strip .grip { margin-left: 2px; width: 89px; }
.strip-body { width: 50px; height: 737px; margin-top: 6px; background: linear-gradient(90deg, #2e2e2e 70%, #282828); border-right: 1px solid #000; display: flex; flex-direction: column; overflow: hidden; }
.play { width: 25px; height: 26px; flex: none; margin: 640px 0 0 12px; background: #4a4a4a; border: 1px solid #222; border-radius: 3px; display: flex; align-items: center; justify-content: center; }
.thumb { margin: 11px 0 0 5px; width: 60px; height: 56px; border-radius: 4px; background: linear-gradient(#5a6a80, #3c7fdc); padding: 10px 4px; flex: none; }
.thumb i { display: block; width: 38px; height: 35px; background: linear-gradient(#5c6068, #64758a); border: 1px solid #222b38; }

.explorer { width: 200px; flex: none; padding-top: 8px; padding-left: 5px; display: flex; flex-direction: column; }
.explorer .grip { margin-left: 2px; width: 185px; }
.ex-menu { display: flex; gap: 21px; padding-left: 16px; margin-top: 11px; height: 19px; font: 14.700px/19px "Open Sans", sans-serif; letter-spacing: -.12px; }
.more { margin-left: 177px; }
.ex-menu + .more { margin-top: 7px; }
.ex-body { display: flex; margin-top: 21px; height: 643px; }
.ex-icons { width: 25px; display: flex; flex-direction: column; gap: 3px; padding-top: 4px; }
.fbtn { background: #5b87c2; }
.ex-list { width: 165px; border: 1px solid #383838; border-left: 1px solid #333; display: flex; flex-direction: column; }
.ex-head { height: 23px; border: 1px solid #666; border-right: 0; line-height: 21px; padding-left: 2px; letter-spacing: .38px; margin-bottom: 1px; }
.ex-row { display: flex; height: 22px; letter-spacing: .1px; }
.ex-row span { flex: 1; padding-left: 3px; background: #4d4d4d; line-height: 23px; }
.ex-row.dim { color: #909090; }
.ex-row.sel span { background: #808080; color: #fff; }
.hscroll { margin-top: auto; height: 21px; background: #f0f0f0; }
.ex-body + .more { margin-top: 3px; }

.viewport { width: 1108px; height: 748px; margin-top: 6px; flex: none; border: 2px solid #7a6628; background: #353535; position: relative; }
.vlabel { position: absolute; left: 3px; top: 4px; font: 13.500px/20px "Open Sans", sans-serif; color: #d0d0d0; word-spacing: 1px; letter-spacing: -.08px; }
.scene { font-family: "DejaVu Sans Condensed", sans-serif; }

.panel { width: 518px; flex: none; padding: 8px 0 0 5px; letter-spacing: .26px; }
.panel .grip { margin-left: 2px; }
.ctabs { display: flex; gap: 2px; margin-top: 6px; height: 34px; }
.ctabs span { width: 38px; height: 34px; background: #393939; border: 1px solid #3b3b3b; border-radius: 5px 5px 0 0; }
.ctabs svg { margin: -1px 0 0 0; }
.ctabs .cur { background: #444; border-color: #3a3a3a; border-bottom: 0; }
.pbody { display: flex; height: 703px; border: 1px solid #393939; border-radius: 0 4px 4px 4px; margin-top: -1px; padding-left: 5px; }
.pleft { width: 251px; height: 700px; overflow: hidden; }
.namerow { display: flex; margin-top: 8px; gap: 6px; }
.field { width: 221px; height: 24px; background: #646464; border: 1px solid #3a3a3a; line-height: 22px; padding-left: 3px; color: #dcdcdc; display: flex; align-items: center; letter-spacing: .12px; }
.field .tri { margin-left: auto; margin-right: 8px; }
.pink { width: 22px; height: 24px; background: #f2c9c9; border: 1px solid #111; }
.modlist { width: 251px; margin-top: 12px; }
.stack { width: 251px; height: 222px; margin-top: 4px; border: 1px solid #fff; }
.srow { display: flex; height: 22px; padding-top: 1px; border-bottom: 1px solid #777; }
.sname { width: 223px; border: 1px solid #5b87c2; line-height: 18px; padding-left: 2px; display: flex; justify-content: space-between; padding-right: 4px; align-items: center; }
.sicons { margin-top: 3px; }
.split { display: flex; align-items: center; margin: 10px 0 0 6px; height: 12px; gap: 3px; }
.split i { width: 109px; height: 1px; background: #666; }
.split b { width: 13px; height: 3px; background: repeating-linear-gradient(90deg, #aaa 0 1px, #444 1px 2px); }
.pscroll { display: flex; margin-top: 3px; height: 342px; }
.rolls { display: flex; flex-direction: column; gap: 4px; width: 241px; margin-left: -2px; overflow: hidden; }
.roll { background: #505050; border: 1px solid #3d3d3d; border-radius: 4px; flex: none; }
.roll h3 { margin: 0; font-size: 12px; line-height: 22px; height: 22px; display: flex; align-items: center; padding: 0 8px 0 7px; color: #fff; letter-spacing: .28px; }
.roll h3 .tri { margin-right: 8px; }
.roll h3 .tri:not(.right) { border-top-color: #aaa; }
.roll h3 .tri.right { margin-left: 1px; margin-right: 9px; }
.dots { width: 8px; height: 8px; margin-left: auto; background: repeating-linear-gradient(90deg, transparent 0 1px, #505050 1px 2px), repeating-linear-gradient(#999 0 1px, #505050 1px 2px); }
.closed { height: 23px; }
.closed h3 { height: 21px; line-height: 21px; }
.selroll { height: 293px; }
.bar { width: 7px; margin-left: 5px; background: #505050; border: 1px solid #3a3a3a; border-radius: 3px; height: 338px; }
.subobj { margin: 4px 0 0 38px; height: 27px; }
.ck { height: 24px; display: flex; align-items: center; padding-left: 24px; }
.subobj + .ck { margin-top: 6px; }
.cb { width: 14px; height: 14px; background: #646464; border: 1px solid #4a4a4a; margin-right: 3px; }
.cb.on { position: relative; }
.cb.on::after { content: ""; position: absolute; left: 4px; top: 0; width: 3px; height: 7px; border: solid #e8e8e8; border-width: 0 2px 2px 0; transform: rotate(42deg); }
.off { color: #858585; }
.off .cb, .spin.off { background: #575757; }
.ang { width: 71px; }
.spin { display: flex; align-items: center; width: 77px; height: 20px; padding: 0 4px 0 3px; background: #646464; border: 1px solid #4a4a4a; color: #dcdcdc; line-height: 18px; letter-spacing: 0; flex: none; }
.spin u { margin-left: auto; width: 6px; height: 12px; background: #ddd; clip-path: polygon(50% 0, 100% 42%, 0 42%, 0 58%, 100% 58%, 50% 100%, 0 58%, 0 42%); }
.off .spin, .spin.off { background: #575757; color: #858585; }
.off u { background: #999; }
.w107 { width: 107px; }
.brow { display: flex; padding-left: 22px; }
.b1 { gap: 8px; margin-top: 2px; }
.b1 button { width: 96px; height: 21px; }
.b2 { margin-top: 5px; }
.b2 button { height: 21px; width: 76px; }
.b2 .loop { width: 78px; margin-left: 9px; }
.spin.mini { width: 15px; margin-left: 4px; padding: 0 4px; }
.b2 .loop + .mini { margin-left: 2px; }
.grp { position: relative; border: 1px solid #3a3a3a; border-radius: 4px; }
.grp em { position: absolute; left: 5px; top: -8px; background: #505050; padding: 0 3px; }
.prev { margin: 13px 0 0 11px; width: 213px; height: 41px; display: flex; padding: 14px 0 0 2px; }
.prev > span { display: flex; align-items: center; height: 16px; }
.prev > span:nth-of-type(1) { width: 66px; }
.prev > span:nth-of-type(2) { width: 82px; }
.rb { width: 15px; height: 15px; border-radius: 50%; background: #606060; border: 1px solid #484848; margin-right: 7px; }
.rb.on { background: radial-gradient(circle, #e2e2e2 4px, #606060 5px); }
.count { text-align: right; margin: 9px 25px 0 0; }

.pright { display: flex; height: 698px; margin-top: 2px; }
.pright .rolls { width: 240px; margin-left: 0; }
.subsurf { height: 475px; }
.subsurf > h3, .edges > h3 { height: 22px; }
.pright .ck { padding-left: 24px; }
.pright .ck.first { margin-top: 8px; }
.ck.second { margin-top: 2px; }
.cage { width: 116px; letter-spacing: .45px; }
.sw { width: 20px; height: 18px; border: 1px solid #000; background: #e2e28e; margin-left: 10px; }
.sw.orange { background: #ffc800; margin-left: 0; }
.grp.g1, .grp.g2, .grp.g3, .grp.g4 { margin-left: 16px; width: 203px; }
.grp p { margin: 0 6px 6px 7px; display: flex; align-items: center; height: 20px; }
.grp p label { margin-left: auto; margin-right: 5px; position: relative; top: -1px; letter-spacing: .35px; }
.g1 { margin-top: 7px; height: 61px; padding-top: 7px; }
.g2 { margin-top: 7px; height: 63px; padding-top: 8px; }
.g3 { margin-top: 7px; height: 61px; padding-top: 11px; }
.g4 { margin-top: 7px; height: 111px; padding-top: 8px; }
.pright .g3 .ck, .pright .g4 .ck { padding-left: 7px; height: 22px; }
.pright .g4 .ck { height: 20px; }
.g4 button { display: block; width: 127px; margin: 6px 0 0 36px; height: 23px; }
.edges { height: 198px; }
.edges > h3 { height: 22px; }
.wide { display: block; width: 197px; margin: 8px 0 6px 19px; }
.wide.last { margin-top: 8px; height: 24px; }
.erow { display: flex; gap: 7px; margin: 0 0 6px 19px; }
.erow > div { width: 95px; display: flex; gap: 1px; }
.erow button { flex: 1; }
.erow .opt { flex: none; width: 19px; }
.opt i { display: block; margin: 0 auto; width: 10px; height: 10px; border: 1px solid #000; border-top-width: 3px; }
.rbar { height: 697px; margin-left: 4px; width: 8px; background: linear-gradient(#505050 345px, #383838 345px); }

.time { height: 62px; flex: none; display: flex; padding: 0 0 0 2px; }
.time .grip { height: 56px; margin: 5px 6px 0 0; }
.slider { display: flex; gap: 2px; padding-left: 1px; margin-top: 4px; height: 21px; text-align: center; line-height: 21px; color: #ddd; }
.slider span { background: #646464; border-radius: 4px; }
.ar { width: 18px; }
.thumbw { width: 154px; }
.time-main { flex: 1; }
.track { display: flex; border-top: 1px solid #111; margin-top: 5px; height: 32px; }
.ticks { background: #282828; font-size: 12px; overflow: visible; }

.status { height: 68px; flex: none; display: flex; letter-spacing: .3px; }
.listener { width: 357px; margin: 5px 0 0 4px; flex: none; height: 60px; }
.pinkbox { height: 29px; background: #dbc2c2; border: 2px solid #808080; border-right-color: #fff; border-bottom-color: #fff; }
.whitebox { height: 30px; background: #fff; border: 2px solid #808080; border-right-color: #eee; border-bottom-color: #eee; color: #808080; font: 15px/21px "Liberation Mono", monospace; letter-spacing: .05px; padding-left: 3px; }
.sdiv { width: 3px; height: 62px; margin: 3px 0 0 3px; border: 1px solid #111; border-left-color: #333; }
.smid { width: 991px; padding-left: 4px; flex: none; }
.line1 { display: flex; align-items: center; margin-top: 9px; height: 24px; }
.line1 .msg { width: 441px; letter-spacing: .42px; }
.line1 label { width: 17px; padding-left: 1px; flex: none; letter-spacing: 0; }
.line1 label + .spin { width: 85px; height: 22px; margin-right: 2px; letter-spacing: .1px; }
.line1 svg + label { width: 20px; padding-left: 2px; }
.line1 .grid { margin-left: 2px; }
.line2 { display: flex; align-items: center; margin-top: 6px; height: 26px; }
.line2 .msg { width: 822px; }
.att { letter-spacing: .6px; color: #ddd; }
.tt { width: 26px; height: 25px; background: #5b87c2; border-radius: 4px; margin-right: 6px; }
.play-ctl { width: 160px; flex: none; padding-top: 5px; }
.pc2 { display: flex; align-items: center; height: 26px; }
.pc2 .spin { width: 87px; height: 21px; border-left: 1px solid #111; }
.pc2 svg:last-child { margin-left: 3px; }
.bigkey { width: 54px; height: 55px; margin-top: 6px; }
.keys { width: 60px; margin: 6px 0 0 4px; display: flex; flex-direction: column; gap: 2px; flex: none; }
.keys button { height: 27px; width: 59px; }
.keyf { margin: 6px 0 0 2px; width: 160px; flex: none; }
.keyf .field { width: 145px; padding-left: 7px; letter-spacing: .35px; }
.kf2 { display: flex; margin-top: 3px; }
.kf2 button { width: 111px; height: 28px; }
.nav { display: grid; grid-template-columns: repeat(4, 28px); grid-auto-rows: 28px; margin: 8px 0 0 0; }

.taskbar { height: 50px; flex: none; background: #000; display: flex; color: #fff; font-family: "Open Sans", sans-serif; font-stretch: normal; }
.start { width: 60px; padding: 15px 0 0 20px; flex: none; }
.search { width: 430px; flex: none; background: #f2f2f2; color: #333; display: flex; align-items: center; padding: 0 18px 0 11px; font-size: 16.500px; }
.search span { margin-left: 11px; letter-spacing: -.4px; }
.search svg:last-child { margin-left: auto; }
.tview { width: 63px; padding: 15px 0 0 17px; flex: none; }
.tapp { width: 62px; flex: none; display: flex; justify-content: center; padding-top: 10px; position: relative; }
.tapp.open::after { content: ""; position: absolute; bottom: 0; left: 6px; right: 5px; height: 3px; background: #76b9ed; }
.tapp.active { background: #333; }
.tapp.active::after { left: 0; right: 0; }
.tray { margin-left: 551px; }
.clock { width: 100px; display: flex; flex-direction: column; align-items: center; font-size: 14px; line-height: 23px; padding-top: 2px; flex: none; }
.notif { margin: 14px 0 0 10px; }
.desk { width: 1px; margin-left: auto; margin-right: 5px; background: #555; }
</style>
